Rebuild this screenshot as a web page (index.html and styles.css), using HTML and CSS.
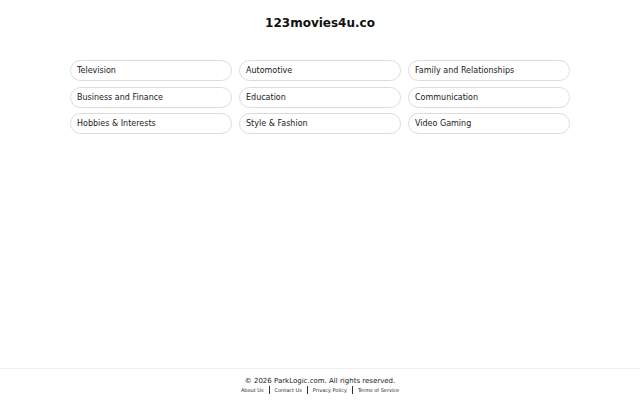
FILE: index.html
```html
<!DOCTYPE html>
<html>
<head>
<meta charset="utf-8">
<link rel="stylesheet" href="styles.css">
</head>
<body>
<div class="page">
  <header class="header">
    <h1 class="title">123movies4u.co</h1>
  </header>
  <main class="main">
    <div class="grid">
      <a class="pill" href="#">Television</a>
      <a class="pill" href="#">Automotive</a>
      <a class="pill" href="#">Family and Relationships</a>
      <a class="pill" href="#">Business and Finance</a>
      <a class="pill" href="#">Education</a>
      <a class="pill" href="#">Communication</a>
      <a class="pill" href="#">Hobbies &amp; Interests</a>
      <a class="pill" href="#">Style &amp; Fashion</a>
      <a class="pill" href="#">Video Gaming</a>
    </div>
  </main>
  <footer class="footer">
    <div class="copy">© 2026 ParkLogic.com. All rights reserved.</div>
    <nav class="links">
      <a href="#">About Us</a>
      <a href="#">Contact Us</a>
      <a href="#">Privacy Policy</a>
      <a href="#">Terms of Service</a>
    </nav>
  </footer>
</div>
</body>
</html>
```
FILE: styles.css
```css
* { box-sizing: border-box; }
html, body { margin: 0; padding: 0; }
body {
  font-family: "DejaVu Sans", sans-serif;
  color: #111;
  background: #fff;
}
.page {
  min-height: 400px;
  display: flex;
  flex-direction: column;
}
.header {
  padding-top: 15px;
  text-align: center;
}
.title {
  margin: 0;
  font-size: 12px;
  line-height: 16px;
  font-weight: bold;
  color: #111;
}
.main {
  flex: 1;
  padding-top: 29px;
}
.grid {
  width: 500px;
  margin: 0 auto;
  display: grid;
  grid-template-columns: repeat(3, 1fr);
  column-gap: 7px;
  row-gap: 5.5px;
}
.pill {
  display: block;
  height: 21px;
  line-height: 19px;
  padding: 0 6px;
  border: 1px solid #dcdcdc;
  border-radius: 11px;
  font-size: 8px;
  color: #1a1a1a;
  text-decoration: none;
}
.footer {
  border-top: 1px solid #ececec;
  padding: 7px 0 6px;
  text-align: center;
}
.copy {
  font-size: 7px;
  line-height: 10px;
  color: #222;
}
.links {
  display: flex;
  justify-content: center;
  align-items: center;
}
.links a {
  font-size: 5px;
  line-height: 8px;
  color: #222;
  text-decoration: none;
  padding: 0 5px;
}
.links a + a {
  border-left: 1px solid #333;
}
```
